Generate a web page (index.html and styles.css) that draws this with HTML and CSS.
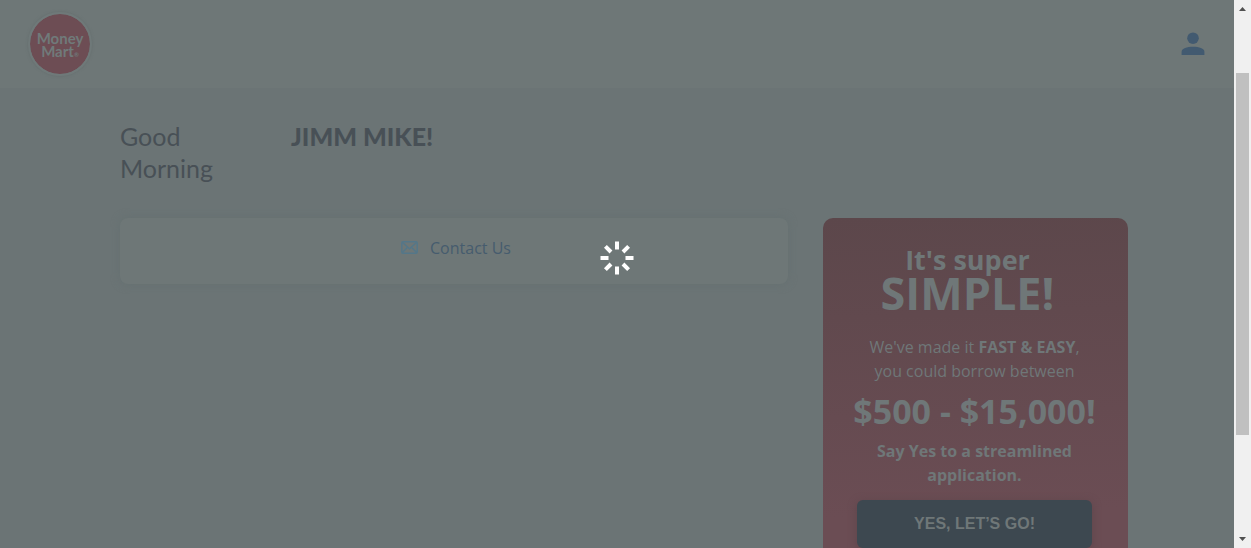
FILE: index.html
```html
<!DOCTYPE html>
<html lang="en">
<head>
<meta charset="utf-8">
<title>Money Mart</title>
<link rel="stylesheet" href="styles.css">
</head>
<body>
<div class="shell">
  <div class="page">
    <header class="header">
      <a class="logo" href="#" aria-label="Money Mart home">
        <span class="logo-text">Money<br>Mart<span class="logo-mark">®</span></span>
      </a>
      <button class="account" type="button" aria-label="Account">
        <svg width="24" height="24" viewBox="0 0 24 24"><circle cx="12" cy="6.2" r="5.8"/><path d="M.6 23v-3.2C.6 16.600 6 14.800 12 14.800s11.400 1.800 11.400 5V23z"/></svg>
      </button>
    </header>
    <main class="content">
      <h1 class="greeting"><span class="greeting-time">Good Morning</span><span class="greeting-name">JIMM MIKE!</span></h1>
      <div class="columns">
        <section class="contact">
          <a class="contact-link" href="#">
            <svg width="17" height="13" viewBox="0 0 17 13"><rect x=".8" y=".8" width="15.400" height="11.400" rx="1.200"/><path d="M1.500 1.500l7 6.300 7-6.300M1.500 11.500l5-5.200M15.500 11.500l-5-5.200"/></svg>
            Contact Us
          </a>
        </section>
        <section class="promo">
          <h2 class="promo-title">It's super<strong>SIMPLE!</strong></h2>
          <p class="promo-text">We've made it <b>FAST &amp; EASY</b>,<br>you could borrow between</p>
          <p class="promo-amount">$500 - $15,000!</p>
          <p class="promo-text promo-strong">Say Yes to a streamlined application.</p>
          <button class="promo-button" type="button">YES, LET’S GO!</button>
        </section>
      </div>
    </main>
    <div class="loading" role="status" aria-label="Loading">
      <svg width="34" height="34" viewBox="-17 -17 34 34"><path d="M0-8.500v-8M0 8.500v8M-8.500 0h-8M8.500 0h8M-6-6l-5.600-5.600M6-6l5.600-5.600M-6 6l-5.600 5.600M6 6l5.600 5.600"/></svg>
    </div>
  </div>
  <div class="scrollbar" aria-hidden="true">
    <svg width="7" height="4" viewBox="0 0 7 4"><path d="M0 4l3.500-4L7 4z"/></svg>
    <div class="track"><div class="thumb"></div></div>
    <svg width="7" height="4" viewBox="0 0 7 4"><path d="M0 0l3.500 4L7 0z"/></svg>
  </div>
</div>
</body>
</html>
```
FILE: styles.css
```css
* { box-sizing: border-box; }

body {
  margin: 0;
  background: #6b7475;
  color: #485056;
  font-family: "Open Sans", sans-serif;
  font-size: 16px;
}

.shell { display: flex; height: 100vh; overflow: hidden; }
.page { position: relative; flex: 1; min-width: 0; overflow: hidden; }

.header {
  display: flex;
  align-items: center;
  justify-content: space-between;
  height: 88px;
  padding: 0 29px 0 28px;
  background: #6e7777;
}

.logo {
  display: flex;
  align-items: center;
  justify-content: center;
  width: 64px;
  height: 64px;
  padding-top: 4px;
  border: 2px solid #6f7979;
  border-radius: 50%;
  background: #6d4d54;
  background-clip: padding-box;
  box-shadow: 0 0 2px 1px #697272;
  color: #707a7a;
  font: bold 15px/13px Lato, sans-serif;
  text-align: center;
  text-decoration: none;
}
.logo-mark { font-size: 6px; }

.account { padding: 0; border: 0; background: none; }
.account svg { display: block; fill: #425a70; }

.content { padding: 32px 106px 0 120px; }

.greeting {
  display: flex;
  align-items: flex-start;
  margin: 0 0 34px;
  font: 400 25px/32px Lato, sans-serif;
}
.greeting-time { width: 120px; margin-right: 51px; }
.greeting-name { font-weight: 900; }

.columns {
  display: grid;
  grid-template-columns: minmax(0, 1fr) 305px;
  gap: 35px;
  align-items: start;
}

.contact {
  display: flex;
  justify-content: center;
  padding: 18px;
  border-radius: 8px;
  background: #6e7777;
  box-shadow: 0 0 8px #657071;
}
.contact-link {
  display: flex;
  gap: 12px;
  color: #465c6e;
  line-height: 24px;
  padding: 0 0 6px 4px;
  text-decoration: none;
}
.contact-link svg { margin-top: 5px; fill: none; stroke: #547789; stroke-width: 1.5; }

.promo {
  padding: 28px 26px 40px 24px;
  border-radius: 10px;
  background: linear-gradient(178deg, #5c474b, #6b4d54 300px);
  color: #6f7778;
  text-align: center;
}
.promo-title {
  margin: 0 0 23px;
  padding-right: 14px;
  font-size: 27px;
  line-height: 28px;
}
.promo-title strong { display: block; font-size: 45px; font-weight: 700; line-height: 38px; }
.promo-text { margin: 0; line-height: 24px; }
.promo-amount { margin: 0; font-size: 34px; line-height: 56px; font-weight: 700; }
.promo-strong { font-weight: 700; padding: 0 16px; }
.promo-button {
  width: 235px;
  height: 48px;
  margin-top: 13px;
  border: 0;
  border-radius: 6px;
  background: #3d4850;
  box-shadow: 0 2px 8px #5d454b;
  color: #6f7778;
  font: bold 16px "Liberation Sans", sans-serif;
}

.loading {
  position: absolute;
  inset: 0;
  display: grid;
  place-items: center;
  padding-bottom: 32px;
}
.loading svg { fill: none; stroke: #fff; stroke-width: 4; }

.scrollbar {
  display: flex;
  flex-direction: column;
  align-items: center;
  width: 17px;
  padding: 7px 0;
  background: #f0f0f0;
}
.scrollbar svg { fill: #505050; }
.track { flex: 1; width: 13px; padding: 62px 0 102px; }
.thumb { height: 100%; background: #c0c0c0; }
```
